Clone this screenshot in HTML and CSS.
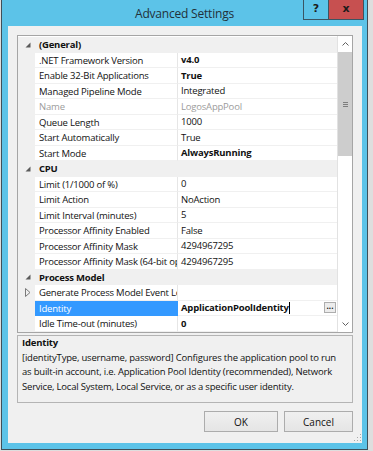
FILE: index.html
```html
<!DOCTYPE html>
<html lang="en">
<head>
    <meta charset="UTF-8">
    <title>Advanced Settings</title>
    <link rel="stylesheet" href="styles.css">
</head>
<body>
    <div class="window">
        <div class="titlebar">
            <div class="title">Advanced Settings</div>
            <div class="caption">
                <span class="cap-btn help">?</span>
                <span class="cap-btn close">x</span>
            </div>
        </div>

        <div class="client">
            <div class="grid">
                <div class="rows">
                    <div class="row cat">
                        <span class="gutter"><svg width="6" height="6" viewBox="0 0 6 6"><polygon points="5.5,0.5 5.5,5.5 0.5,5.5" fill="#5b5b5b"/></svg></span>
                        <span class="label">(General)</span>
                    </div>
                    <div class="row prop"><span class="gutter"></span><span class="label">.NET Framework Version</span><span class="value bold">v4.0</span></div>
                    <div class="row prop"><span class="gutter"></span><span class="label">Enable 32-Bit Applications</span><span class="value bold">True</span></div>
                    <div class="row prop"><span class="gutter"></span><span class="label">Managed Pipeline Mode</span><span class="value">Integrated</span></div>
                    <div class="row prop disabled"><span class="gutter"></span><span class="label">Name</span><span class="value">LogosAppPool</span></div>
                    <div class="row prop"><span class="gutter"></span><span class="label">Queue Length</span><span class="value">1000</span></div>
                    <div class="row prop"><span class="gutter"></span><span class="label">Start Automatically</span><span class="value">True</span></div>
                    <div class="row prop"><span class="gutter"></span><span class="label">Start Mode</span><span class="value bold">AlwaysRunning</span></div>

                    <div class="row cat">
                        <span class="gutter"><svg width="6" height="6" viewBox="0 0 6 6"><polygon points="5.5,0.5 5.5,5.5 0.5,5.5" fill="#5b5b5b"/></svg></span>
                        <span class="label">CPU</span>
                    </div>
                    <div class="row prop"><span class="gutter"></span><span class="label">Limit (1/1000 of %)</span><span class="value">0</span></div>
                    <div class="row prop"><span class="gutter"></span><span class="label">Limit Action</span><span class="value">NoAction</span></div>
                    <div class="row prop"><span class="gutter"></span><span class="label">Limit Interval (minutes)</span><span class="value">5</span></div>
                    <div class="row prop"><span class="gutter"></span><span class="label">Processor Affinity Enabled</span><span class="value">False</span></div>
                    <div class="row prop"><span class="gutter"></span><span class="label">Processor Affinity Mask</span><span class="value">4294967295</span></div>
                    <div class="row prop"><span class="gutter"></span><span class="label">Processor Affinity Mask (64-bit option)</span><span class="value">4294967295</span></div>

                    <div class="row cat">
                        <span class="gutter"><svg width="6" height="6" viewBox="0 0 6 6"><polygon points="5.5,0.5 5.5,5.5 0.5,5.5" fill="#5b5b5b"/></svg></span>
                        <span class="label">Process Model</span>
                    </div>
                    <div class="row prop">
                        <span class="gutter"><svg width="6" height="9" viewBox="0 0 6 9"><polygon points="0.5,0.5 5,4.5 0.5,8.5" fill="none" stroke="#7a7a7a"/></svg></span>
                        <span class="label">Generate Process Model Event Log Entry</span><span class="value"></span>
                    </div>
                    <div class="row prop selected">
                        <span class="gutter"></span>
                        <span class="label">Identity</span>
                        <span class="value bold">ApplicationPoolIdentity<span class="caret"></span><span class="ellipsis">...</span></span>
                    </div>
                    <div class="row prop"><span class="gutter"></span><span class="label">Idle Time-out (minutes)</span><span class="value bold">0</span></div>
                </div>

                <div class="vscroll">
                    <div class="arrow"><svg width="7" height="4" viewBox="0 0 7 4"><polyline points="0.5,3.5 3.5,0.5 6.5,3.5" fill="none" stroke="#606060"/></svg></div>
                    <div class="thumb"><svg width="5" height="5" viewBox="0 0 5 5"><path d="M0 0.5H5M0 2.5H5M0 4.5H5" stroke="#7d7d7d"/></svg></div>
                    <div class="track"></div>
                    <div class="arrow"><svg width="7" height="4" viewBox="0 0 7 4"><polyline points="0.5,0.5 3.5,3.5 6.5,0.5" fill="none" stroke="#606060"/></svg></div>
                </div>
            </div>

            <div class="desc">
                <div class="desc-title">Identity</div>
                <div>[identityType, username, password] Configures the application pool to run</div>
                <div>as built-in account, i.e. Application Pool Identity (recommended), Network</div>
                <div>Service, Local System, Local Service, or as a specific user identity.</div>
            </div>

            <div class="actions">
                <button class="btn ok">OK</button>
                <button class="btn cancel">Cancel</button>
            </div>

            <div class="grip-row">
                <svg width="8" height="8" viewBox="0 0 8 8">
                    <rect x="6" y="0" width="1" height="1" fill="#a8a8a8"/>
                    <rect x="3" y="3" width="1" height="1" fill="#a8a8a8"/>
                    <rect x="6" y="3" width="1" height="1" fill="#a8a8a8"/>
                    <rect x="0" y="6" width="1" height="1" fill="#a8a8a8"/>
                    <rect x="3" y="6" width="1" height="1" fill="#a8a8a8"/>
                    <rect x="6" y="6" width="1" height="1" fill="#a8a8a8"/>
                </svg>
            </div>
        </div>
    </div>
</body>
</html>
```

FILE: styles.css
```css
body {
    margin: 0;
    background: #dedede;
    font-family: "Open Sans", "Noto Sans", sans-serif;
    color: #111;
}
.window {
    margin-left: 1px;
    width: 367px;
    height: 450px;
    box-sizing: border-box;
    background: #5cc3e8;
    border: 1px solid #3f4f59;
    border-top: none;
    display: flex;
    flex-direction: column;
}
.titlebar {
    height: 26px;
    flex-shrink: 0;
    display: grid;
    grid-template-columns: 1fr auto 1fr;
}
.title {
    grid-column: 2;
    font-size: 12px;
    letter-spacing: -0.2px;
    color: #22313a;
    padding-top: 5px;
}
.caption {
    grid-column: 3;
    justify-self: end;
    display: flex;
    height: 20px;
    margin-right: 3px;
}
.cap-btn {
    box-sizing: border-box;
    height: 20px;
    border: 1px solid #3a5563;
    border-top: none;
    text-align: center;
    font-family: "DejaVu Sans", sans-serif;
    font-weight: bold;
    font-size: 11px;
    line-height: 18px;
    color: #1b1b1b;
}
.help {
    width: 25px;
    border-right: none;
}
.close {
    width: 36px;
    background: #c75050;
}
.client {
    flex: 1;
    margin: 0 5px 6px 6px;
    background: #f0f0f0;
    padding: 9px 9px 0;
    display: flex;
    flex-direction: column;
}
.grid {
    height: 298px;
    flex-shrink: 0;
    box-sizing: border-box;
    border: 1px solid #a5a5a5;
    background: #fff;
    display: flex;
}
.rows {
    flex: 1;
    padding-top: 1px;
    overflow: hidden;
}
.row {
    height: 15.5px;
    display: grid;
    grid-template-columns: 17px 143px 1fr;
    font-size: 9.5px;
    letter-spacing: -0.2px;
    line-height: 15px;
}
.gutter {
    background: #f0f0f0;
    display: flex;
    align-items: center;
    justify-content: center;
    padding-left: 2px;
}
.label, .value {
    white-space: nowrap;
    overflow: hidden;
    box-sizing: border-box;
}
.label {
    padding-left: 4px;
}
.value {
    padding-left: 3px;
    display: flex;
    align-items: center;
}
.cat {
    background: #f0f0f0;
}
.cat .label {
    grid-column: 2 / 4;
    font-weight: bold;
}
.prop .label {
    border-right: 1px solid #e6e6e6;
    border-bottom: 1px solid #f0f0f0;
}
.prop .value {
    border-bottom: 1px solid #f0f0f0;
}
.bold {
    font-weight: bold;
}
.disabled .label, .disabled .value {
    color: #9c9c9c;
}
.selected .label {
    background: #3399ff;
    color: #fff;
    border-color: #3399ff;
}
.caret {
    width: 1px;
    height: 12px;
    background: #000;
}
.ellipsis {
    margin-left: auto;
    margin-right: 1px;
    width: 12px;
    height: 11px;
    box-sizing: border-box;
    border: 1px solid #adadad;
    background: #ececec;
    font-size: 8px;
    line-height: 6px;
    text-align: center;
    font-weight: bold;
    letter-spacing: 0;
}
.vscroll {
    width: 15px;
    box-sizing: border-box;
    border-left: 1px solid #e2e2e2;
    display: flex;
    flex-direction: column;
    background: #fff;
}
.arrow {
    height: 16px;
    display: flex;
    align-items: center;
    justify-content: center;
}
.thumb {
    height: 104px;
    background: #cdcdcd;
    display: flex;
    align-items: center;
    justify-content: center;
}
.track {
    flex: 1;
}
.desc {
    margin-top: 2px;
    height: 68px;
    box-sizing: border-box;
    border: 1px solid #b4b4b4;
    padding: 0 4px;
    font-size: 9.5px;
    letter-spacing: -0.2px;
    line-height: 14.7px;
    white-space: nowrap;
    overflow: hidden;
}
.desc-title {
    font-weight: bold;
}
.actions {
    display: flex;
    justify-content: flex-end;
    gap: 6px;
    margin-top: 8px;
}
.btn {
    height: 21px;
    box-sizing: border-box;
    border: 1px solid #acacac;
    background: linear-gradient(#f0f0f0, #e5e5e5);
    font-family: inherit;
    font-size: 10px;
    color: #111;
    padding: 0;
}
.ok {
    width: 74px;
}
.cancel {
    width: 69px;
}
.grip-row {
    display: flex;
    justify-content: flex-end;
    margin-right: -9px;
    margin-top: 2px;
}
```
